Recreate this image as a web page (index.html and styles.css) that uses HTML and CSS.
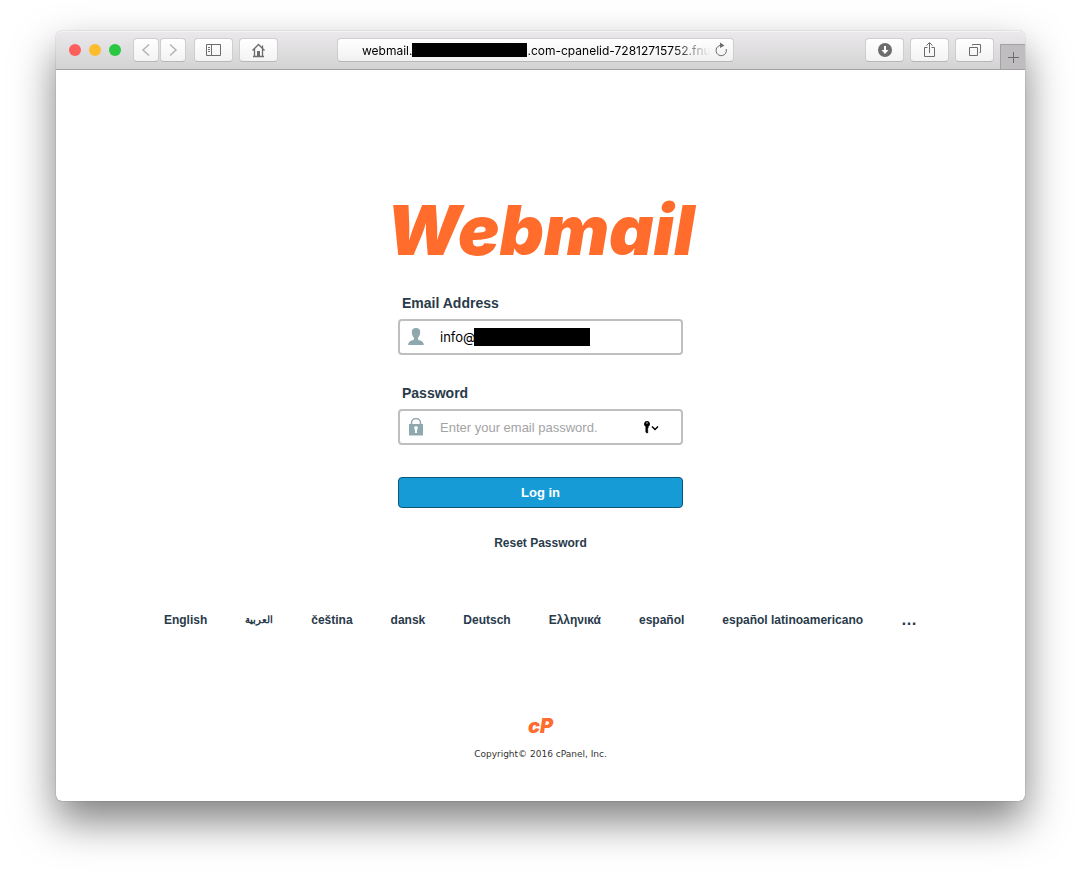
FILE: index.html
```html
<!DOCTYPE html>
<html lang="en">
<head>
    <meta charset="UTF-8">
    <meta name="viewport" content="width=device-width, initial-scale=1.0">
    <title>Webmail Login</title>
    <link rel="stylesheet" href="styles.css">
</head>
<body>
    <div class="window">
        <header class="toolbar">
            <div class="tools-left">
                <div class="lights">
                    <span class="light red"></span>
                    <span class="light yellow"></span>
                    <span class="light green"></span>
                </div>
                <div class="nav-buttons">
                    <button class="tool" aria-label="Back"><svg width="10" height="14" viewBox="0 0 10 14"><path d="M8 1.500 2 7l6 5.500" stroke="#b4b4b4" stroke-width="1.500"/></svg></button>
                    <button class="tool" aria-label="Forward"><svg width="10" height="14" viewBox="0 0 10 14"><path d="m2 1.500 6 5.500-6 5.500" stroke="#b4b4b4" stroke-width="1.500"/></svg></button>
                </div>
                <button class="tool wide" aria-label="Sidebar"><svg width="16" height="14" viewBox="0 0 16 14"><path d="M.500 1.500h14v11H.500zM5.500 1.500v11M2 4.500h2M2 6.500h2M2 8.500h2"/></svg></button>
                <button class="tool wide" aria-label="Home"><svg width="16" height="16" viewBox="0 0 16 16"><path d="M1.500 8.500 7.500 2.500l6 6M3.500 7v7.500M11.500 7v7.500M2 14.500h11M11.500 6V3.500" stroke-width="1.300"/><path class="solid" d="M6 9h3v6H6z"/></svg></button>
            </div>

            <div class="address">
                <div class="url">
                    <span>webmail.</span><span class="redacted"></span><input type="text" aria-label="Address" value=".com-cpanelid-72812715752.fnu">
                </div>
                <button class="reload" aria-label="Reload"><svg width="14" height="16" viewBox="0 0 14 16"><path d="M12.200 7A5.200 5.200 0 1 1 7 3.300"/><path class="solid" d="m6 .500 4.500 2.900L6 6z"/></svg></button>
            </div>

            <div class="tools-right">
                <button class="tool wide" aria-label="Downloads"><svg width="16" height="16" viewBox="0 0 16 16"><circle class="solid" cx="8" cy="8" r="7"/><path d="M8 4v5" stroke="#fff" stroke-width="2"/><path d="M4.500 8h7L8 12z" fill="#fff" stroke="none"/></svg></button>
                <button class="tool wide" aria-label="Share"><svg width="14" height="18" viewBox="0 0 14 18"><path d="M4.500 6.500h-3v9h10v-9h-3M6.500 12V2M3.500 4.500l3-3 3 3"/></svg></button>
                <button class="tool wide" aria-label="Show tabs"><svg width="16" height="16" viewBox="0 0 16 16"><path d="M2.500 5.500h8v8h-8zM5.500 3.500v-1h8v8h-1"/></svg></button>
                <button class="new-tab" aria-label="New tab"><svg width="12" height="12" viewBox="0 0 12 12"><path d="M6.500 1v11M1 6.500h11"/></svg></button>
            </div>
        </header>

        <main class="page">
            <h1 class="brand">Webmail</h1>

            <form class="login">
                <label for="user">Email Address</label>
                <div class="field">
                    <svg class="field-icon" width="16" height="18" viewBox="0 0 16 18"><path d="M8 0c3 0 4.500 2 4.200 4.800-.200 2.400-1.200 4-2.200 5v1.700c1.200 1 5.800 1 5.800 5.500H.200C.200 12.500 4.800 12.500 6 11.500V9.800C5 8.800 4 7.200 3.800 4.800 3.500 2 5 0 8 0z"/></svg>
                    <input type="text" id="user" value="info@">
                    <span class="redacted user-redacted"></span>
                </div>

                <label for="pass">Password</label>
                <div class="field">
                    <svg class="field-icon" width="16" height="18" viewBox="0 0 16 18"><path d="M3.500 6V5a4.500 4.500 0 0 1 9 0v1" fill="none" stroke="#8fa7af" stroke-width="1.500"/><path d="M1 6h14v11.500H1z"/><path d="M8 8a2 2 0 0 1 1 3.700V15H7v-3.300A2 2 0 0 1 8 8z" fill="#fff"/></svg>
                    <input type="password" id="pass" placeholder="Enter your email password.">
                    <button type="button" class="key" aria-label="Saved passwords"><svg width="16" height="14" viewBox="0 0 16 14"><path d="M4 1a3 3 0 0 1 1.500 5.600V8l-1 1 1 1-1 1 1 1L4 13.500 2.500 12V6.600A3 3 0 0 1 4 1z"/><circle cx="4" cy="3" r=".700" fill="#fff"/><path d="m9 6.500 3 3 3-3" fill="none" stroke="#000" stroke-width="1.500"/></svg></button>
                </div>

                <button type="submit" class="login-button">Log in</button>
                <a class="reset" href="#">Reset Password</a>
            </form>

            <nav class="locales">
                <a href="#">English</a>
                <a href="#" class="arabic" lang="ar">العربية</a>
                <a href="#">čeština</a>
                <a href="#">dansk</a>
                <a href="#">Deutsch</a>
                <a href="#">Ελληνικά</a>
                <a href="#">español</a>
                <a href="#">español latinoamericano</a>
                <a href="#" class="more">…</a>
            </nav>

            <footer class="copyright">
                <div class="cp-logo">cP</div>
                <p>Copyright© 2016 cPanel, Inc.</p>
            </footer>
        </main>
    </div>
</body>
</html>
```

FILE: styles.css
```css
* {
    box-sizing: border-box;
}
body {
    margin: 0;
    min-height: 100vh;
    padding: 31px 56px 80px;
    display: flex;
    background-color: #fff;
    color: #293a4a;
    font-family: "Liberation Sans", Arial, sans-serif;
    font-size: 12px;
}
button, input {
    font: inherit;
    margin: 0;
    padding: 0;
}
a {
    color: inherit;
    text-decoration: none;
}

.window {
    flex: 1;
    min-width: 0;
    display: flex;
    flex-direction: column;
    border-radius: 6px;
    background-color: #fff;
    box-shadow: 0 0 1px rgba(0, 0, 0, 0.6), 0 20px 42px rgba(0, 0, 0, 0.5);
}

/* Browser toolbar */
.toolbar {
    display: grid;
    grid-template-columns: minmax(0, 281fr) minmax(0, 397fr) minmax(0, 291fr);
    align-items: center;
    height: 39px;
    border-bottom: 1px solid #a2a2a2;
    border-radius: 6px 6px 0 0;
    background: linear-gradient(#ebe9eb, #d4d3d4);
    box-shadow: inset 0 1px #f5f4f5;
}
.toolbar svg {
    fill: none;
    stroke: #6c6c6c;
}
.toolbar .solid {
    fill: #6c6c6c;
    stroke: none;
}
.tools-left {
    display: flex;
    align-items: center;
    gap: 6px;
    padding-left: 13px;
}
.lights {
    display: flex;
    gap: 8px;
    margin-right: 6px;
}
.light {
    width: 12px;
    height: 12px;
    border-radius: 50%;
}
.red {
    background-color: #fc605c;
}
.yellow {
    background-color: #fdbc2e;
}
.green {
    background-color: #28c840;
}
.nav-buttons {
    display: flex;
    gap: 1px;
    margin-right: 2px;
}
.tool {
    display: flex;
    align-items: center;
    justify-content: center;
    width: 26px;
    height: 24px;
    border: 1px solid #cfcdcf;
    border-bottom-color: #b8b7b8;
    border-radius: 4px;
    background: linear-gradient(#fff, #f3f3f3);
}
.wide {
    width: 39px;
}
.address {
    display: flex;
    align-items: center;
    height: 24px;
    padding: 0 5px 0 24px;
    border: 1px solid #cfcdcf;
    border-bottom-color: #b8b7b8;
    border-radius: 4px;
    background: linear-gradient(#fff, #f1f1f1);
}
.url {
    flex: 1;
    min-width: 0;
    display: flex;
    align-items: center;
    overflow: hidden;
    color: #000;
    font-family: Inter, sans-serif;
    font-size: 12px;
    mask-image: linear-gradient(to right, #000 88%, transparent 99%);
}
.url input {
    flex: 1;
    min-width: 0;
    border: 0;
    background: none;
    color: #000;
}
.redacted {
    flex: none;
    width: 115px;
    height: 14px;
    background-color: #000;
}
.reload {
    display: flex;
    border: 0;
    background: none;
}
.tools-right {
    display: flex;
    align-items: center;
    justify-content: flex-end;
    gap: 6px;
}
.new-tab {
    display: flex;
    align-items: center;
    justify-content: center;
    align-self: flex-end;
    width: 25px;
    height: 25px;
    margin-top: 13px;
    border: 1px solid #a2a2a2;
    border-width: 1px 0 0 1px;
    background-color: #bfbdbf;
}

/* Login page */
.page {
    flex: 1;
    display: flex;
    flex-direction: column;
    align-items: center;
    padding: 128px 20px 40px;
}
.brand {
    margin: 0;
    color: #ff6c2c;
    font-family: Inter, sans-serif;
    font-size: 69px;
    font-style: italic;
    font-weight: 900;
    line-height: 64px;
}
.login {
    display: flex;
    flex-direction: column;
    width: 285px;
    max-width: 100%;
    margin-top: 32px;
}
.login label {
    padding-left: 4px;
    font-size: 14px;
    font-weight: bold;
    line-height: 18px;
    margin-bottom: 7px;
}
.field {
    position: relative;
    display: flex;
    align-items: center;
    height: 36px;
    margin-bottom: 29px;
    padding: 0 22px 0 8px;
    border: 2px solid #bfbfbf;
    border-radius: 4px;
}
.field-icon {
    fill: #8fa7af;
}
.field input {
    flex: 1;
    min-width: 0;
    height: 32px;
    padding-left: 16px;
    border: 0;
    background: none;
    color: #000;
    font-size: 13px;
}
#user {
    font-family: Inter, sans-serif;
}
.field input::placeholder {
    color: #a3a3a3;
}
.user-redacted {
    position: absolute;
    left: 74px;
    width: 116px;
    height: 18px;
}
.key {
    display: flex;
    border: 0;
    background: none;
}
.login-button {
    height: 31px;
    margin-top: 3px;
    border: 1px solid #095779;
    border-radius: 4px;
    background-color: #179bd7;
    color: #fff;
    font-size: 13px;
    font-weight: bold;
}
.reset {
    align-self: center;
    margin-top: 27px;
    font-weight: bold;
    line-height: 16px;
}
.locales {
    display: flex;
    flex-wrap: wrap;
    justify-content: center;
    align-items: center;
    gap: 16px 38px;
    margin-top: 61px;
    font-weight: bold;
    line-height: 16px;
}
.arabic {
    font-size: 10px;
}
.more {
    font-size: 16px;
}
.copyright {
    display: flex;
    flex-direction: column;
    align-items: center;
    margin-top: 88px;
    color: #333;
    font-family: "DejaVu Sans", Verdana, sans-serif;
    font-size: 9px;
}
.cp-logo {
    color: #ff6c2c;
    font-family: Inter, sans-serif;
    font-size: 20px;
    font-style: italic;
    font-weight: 900;
    line-height: 20px;
}
.copyright p {
    margin: 12px 0 0;
    line-height: 12px;
}
```
